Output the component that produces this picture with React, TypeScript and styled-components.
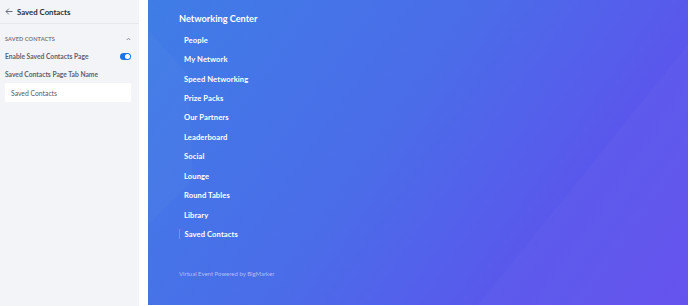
import { createGlobalStyle } from 'styled-components'
import styled from 'styled-components'

const GlobalStyle = createGlobalStyle`
  html, body {
    margin: 0;
    padding: 0;
    background: #ffffff;
    font-family: Lato, "Open Sans", sans-serif;
  }
  * { box-sizing: border-box; }
`

const Shell = styled.div`
  display: grid;
  grid-template-columns: 139px 9px 540px;
  width: 688px;
  height: 306px;
`

const Sidebar = styled.aside`
  background: #f3f4f8;
  height: 306px;
  display: flex;
  flex-direction: column;
`

const SidebarHeader = styled.div`
  height: 24px;
  display: flex;
  align-items: center;
  gap: 4px;
  padding: 0 5px;
  border-bottom: 1px solid #e6e8ee;
  font-size: 7.8px;
  font-weight: 700;
  color: #2a2f3a;
`

const Section = styled.div`
  padding: 10px 8px 0 5px;
  display: flex;
  flex-direction: column;
`

const SectionTitle = styled.div`
  display: flex;
  justify-content: space-between;
  align-items: center;
  font-size: 5.6px;
  font-weight: 700;
  color: #767b87;
  letter-spacing: 0.1px;
  text-transform: uppercase;
  height: 9px;
`

const FieldRow = styled.div<{ $top: number }>`
  display: flex;
  justify-content: space-between;
  align-items: center;
  margin-top: ${(p) => p.$top}px;
  font-size: 6.7px;
  font-weight: 700;
  color: #5d6270;
  height: 10px;
`

const Toggle = styled.span`
  width: 11px;
  height: 7px;
  border-radius: 4px;
  background: #1a73e8;
  position: relative;
  &::after {
    content: '';
    position: absolute;
    right: 1px;
    top: 1px;
    width: 5px;
    height: 5px;
    border-radius: 50%;
    background: #fff;
  }
`

const TextInput = styled.div`
  margin-top: 4px;
  height: 19px;
  background: #ffffff;
  border-radius: 1px;
  display: flex;
  align-items: center;
  padding-left: 6px;
  font-size: 6.8px;
  color: #555a66;
`

const Gap = styled.div`
  background: #ffffff;
`

const Stage = styled.main`
  position: relative;
  height: 305px;
  overflow: hidden;
  background: linear-gradient(125deg, #3f7de6 0%, #4b6ce9 45%, #5a57ec 75%, #634fee 100%);
`

const Decor = styled.svg`
  position: absolute;
  inset: 0;
  width: 100%;
  height: 100%;
`

const Nav = styled.nav`
  position: relative;
  display: flex;
  flex-direction: column;
  padding: 12px 0 0 31px;
`

const NavTitle = styled.h2`
  margin: 0 0 5px;
  font-size: 9.2px;
  font-weight: 700;
  color: #ffffff;
  line-height: 13px;
`

const NavItem = styled.div<{ $active?: boolean }>`
  display: flex;
  align-items: center;
  padding-left: ${(p) => (p.$active ? '4.5px' : '5px')};
  border-left: ${(p) => (p.$active ? '1.5px solid #4aa3ff' : 'none')};
  height: ${(p) => (p.$active ? '10px' : '19.45px')};
  margin: ${(p) => (p.$active ? '4.7px 0' : '0')};
  font-size: 7.6px;
  font-weight: 700;
  letter-spacing: 0.1px;
  color: #ffffff;
`

const Footer = styled.div`
  margin-top: 26px;
  font-size: 6px;
  color: rgba(255, 255, 255, 0.55);
`

const items = [
  'People',
  'My Network',
  'Speed Networking',
  'Prize Packs',
  'Our Partners',
  'Leaderboard',
  'Social',
  'Lounge',
  'Round Tables',
  'Library',
]

export default function App() {
  return (
    <>
      <GlobalStyle />
      <Shell>
        <Sidebar>
          <SidebarHeader>
            <svg width="8" height="7" viewBox="0 0 8 7" fill="none" stroke="#6b7080" strokeWidth="1">
              <path d="M7.5 3.5H1M3.8 0.7L1 3.5l2.8 2.8" />
            </svg>
            Saved Contacts
          </SidebarHeader>
          <Section>
            <SectionTitle>
              Saved Contacts
              <svg width="5" height="4" viewBox="0 0 5 4" fill="none" stroke="#6b7080" strokeWidth="0.8">
                <path d="M0.7 3L2.5 1.2 4.3 3" />
              </svg>
            </SectionTitle>
            <FieldRow $top={8}>
              Enable Saved Contacts Page
              <Toggle />
            </FieldRow>
            <FieldRow $top={8}>Saved Contacts Page Tab Name</FieldRow>
            <TextInput>Saved Contacts</TextInput>
          </Section>
        </Sidebar>
        <Gap />
        <Stage>
          <Decor viewBox="0 0 540 305" preserveAspectRatio="none">
            <polygon points="0,30 0,225 45,180 40,75" fill="rgba(255,255,255,0.025)" />
            <polygon points="329,306 540,45 540,306" fill="rgba(255,255,255,0.025)" />
          </Decor>
          <Nav>
            <NavTitle>Networking Center</NavTitle>
            {items.map((label) => (
              <NavItem key={label}>{label}</NavItem>
            ))}
            <NavItem $active>Saved Contacts</NavItem>
            <Footer>Virtual Event Powered by BigMarker</Footer>
          </Nav>
        </Stage>
      </Shell>
    </>
  )
}
